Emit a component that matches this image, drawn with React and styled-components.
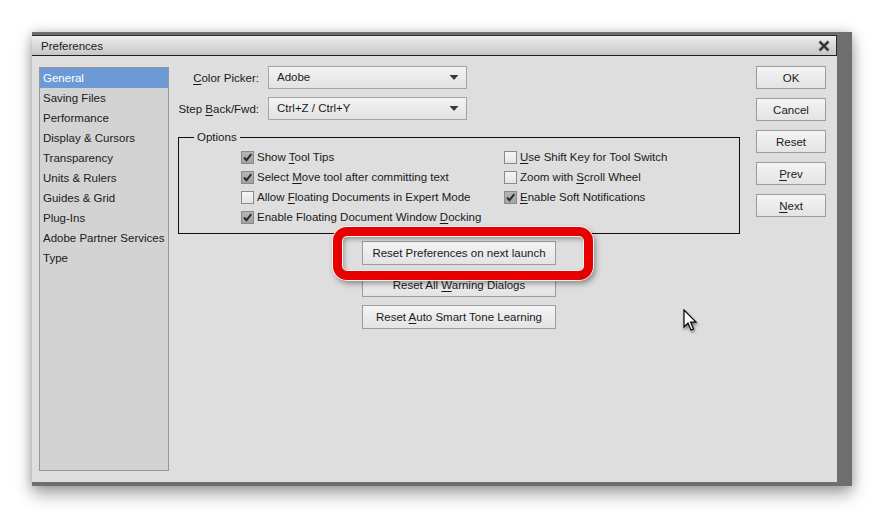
import React from "react";
import styled, { createGlobalStyle } from "styled-components";

const GlobalStyle = createGlobalStyle`
  html, body {
    margin: 0;
    padding: 0;
    background: #ffffff;
  }
  body {
    font-family: "Liberation Sans", Arial, sans-serif;
    font-size: 11.5px;
    color: #1a1a1a;
  }
`;

const categories = [
  "General",
  "Saving Files",
  "Performance",
  "Display & Cursors",
  "Transparency",
  "Units & Rulers",
  "Guides & Grid",
  "Plug-Ins",
  "Adobe Partner Services",
  "Type",
];

const leftOptions = [
  { pre: "Show ", key: "T", post: "ool Tips", checked: true },
  { pre: "Select ", key: "M", post: "ove tool after committing text", checked: true },
  { pre: "Allow ", key: "F", post: "loating Documents in Expert Mode", checked: false },
  { pre: "Enable Floating Document Window ", key: "D", post: "ocking", checked: true },
];

const rightOptions = [
  { pre: "", key: "U", post: "se Shift Key for Tool Switch", checked: false },
  { pre: "Zoom with ", key: "S", post: "croll Wheel", checked: false },
  { pre: "", key: "E", post: "nable Soft Notifications", checked: true },
];

// text with an underlined access key
const Mn = ({ pre, k, post }) => (
  <span>
    {pre}
    <U>{k}</U>
    {post}
  </span>
);

const Check = ({ checked }) => (
  <Box checked={checked}>
    {checked && (
      <svg width="11" height="11" viewBox="0 0 11 11">
        <path d="M2 5.5 L4.5 8.2 L9.3 2.2" fill="none" stroke="#2a2a2a" strokeWidth="1.9" />
      </svg>
    )}
  </Box>
);

const Select = ({ value }) => (
  <SelectBox>
    <span>{value}</span>
    <svg width="10" height="7" viewBox="0 0 10 7">
      <path d="M0.5 1 H9.5 L5 6 Z" fill="#3a3a3a" />
    </svg>
  </SelectBox>
);

const Cursor = () => (
  <CursorWrap>
    <svg width="16" height="24" viewBox="0 0 16 24">
      <path
        d="M1 1 L1 18 L5 14 L8 21 L10.5 20 L7.6 13.2 L13 13.2 Z"
        fill="#fff"
        stroke="#000"
        strokeWidth="1.2"
      />
    </svg>
  </CursorWrap>
);

export default function App() {
  return (
    <>
      <GlobalStyle />
      <Page>
        <Frame>
          <Dialog>
            <TitleBar>
              <span>Preferences</span>
              <svg width="12" height="12" viewBox="0 0 12 12">
                <path d="M1.5 1.5 L10.5 10.5 M10.5 1.5 L1.5 10.5" stroke="#3a3a3a" strokeWidth="2.6" />
              </svg>
            </TitleBar>
            <Body>
              <Sidebar>
                {categories.map((c, i) => (
                  <Category key={c} active={i === 0}>
                    {c}
                  </Category>
                ))}
              </Sidebar>
              <Content>
                <FieldRow>
                  <Label>
                    <Mn pre="" k="C" post="olor Picker:" />
                  </Label>
                  <Select value="Adobe" />
                </FieldRow>
                <FieldRow>
                  <Label>
                    <Mn pre="Step " k="B" post="ack/Fwd:" />
                  </Label>
                  <Select value="Ctrl+Z / Ctrl+Y" />
                </FieldRow>
                <Options>
                  <Legend>Options</Legend>
                  <OptionGrid>
                    <OptionCol>
                      {leftOptions.map((o) => (
                        <OptionRow key={o.post}>
                          <Check checked={o.checked} />
                          <Mn pre={o.pre} k={o.key} post={o.post} />
                        </OptionRow>
                      ))}
                    </OptionCol>
                    <OptionCol>
                      {rightOptions.map((o) => (
                        <OptionRow key={o.post}>
                          <Check checked={o.checked} />
                          <Mn pre={o.pre} k={o.key} post={o.post} />
                        </OptionRow>
                      ))}
                    </OptionCol>
                  </OptionGrid>
                </Options>
                <ResetStack>
                  <Highlighted>
                    <WideButton>
                      <span>Reset Preferences on next launch</span>
                    </WideButton>
                    <RedRing />
                  </Highlighted>
                  <WideButton>
                    <Mn pre="Reset All " k="W" post="arning Dialogs" />
                  </WideButton>
                  <WideButton>
                    <Mn pre="Reset " k="A" post="uto Smart Tone Learning" />
                  </WideButton>
                </ResetStack>
                <Cursor />
              </Content>
              <Actions>
                <Button>OK</Button>
                <Button>Cancel</Button>
                <Button>Reset</Button>
                <Button>
                  <Mn pre="" k="P" post="rev" />
                </Button>
                <Button>
                  <Mn pre="" k="N" post="ext" />
                </Button>
              </Actions>
            </Body>
          </Dialog>
        </Frame>
      </Page>
    </>
  );
}

const Page = styled.div`
  width: 884px;
  height: 518px;
  padding: 32px 0 0 32px;
  box-sizing: border-box;
`;

const Frame = styled.div`
  width: 820px;
  height: 454px;
  box-sizing: border-box;
  padding: 3px 15px 4px 0;
  background: #6e6e6e;
  box-shadow: 0 8px 16px rgba(0, 0, 0, 0.35), 0 0 10px rgba(0, 0, 0, 0.18);
`;

const Dialog = styled.div`
  width: 805px;
  height: 447px;
  background: #dedede;
  display: flex;
  flex-direction: column;
`;

const TitleBar = styled.div`
  height: 21px;
  box-sizing: border-box;
  border-top: 1px solid #2a2a2a;
  border-bottom: 1px solid #1e1e1e;
  border-right: 1px solid #2a2a2a;
  background: linear-gradient(#ececec, #d2d2d2 70%, #c6c6c6);
  display: flex;
  align-items: center;
  justify-content: space-between;
  padding: 0 6px 0 9px;
  color: #1a1a1a;
`;

const Body = styled.div`
  flex: 1;
  display: flex;
  padding: 10px 11px 11px 7px;
`;

const Sidebar = styled.div`
  width: 130px;
  flex: none;
  margin-top: 1px;
  background: #d3d3d3;
  border: 1px solid #969696;
  box-sizing: border-box;
`;

const Category = styled.div`
  height: 20px;
  line-height: 20px;
  padding-left: 3px;
  white-space: nowrap;
  background: ${(p) => (p.active ? "#6b9ad6" : "transparent")};
  color: ${(p) => (p.active ? "#ffffff" : "#1a1a1a")};
`;

const Content = styled.div`
  position: relative;
  flex: 1;
  display: flex;
  flex-direction: column;
  margin-left: 9px;
`;

const FieldRow = styled.div`
  display: flex;
  align-items: center;
  gap: 9px;
  margin-bottom: 8px;
`;

const Label = styled.div`
  width: 81px;
  text-align: right;
  white-space: nowrap;
`;

const SelectBox = styled.div`
  width: 199px;
  height: 23px;
  box-sizing: border-box;
  border: 1px solid #a4a4a4;
  background: linear-gradient(#f3f3f3, #e2e2e2);
  display: flex;
  align-items: center;
  justify-content: space-between;
  padding: 0 7px 0 8px;
  span {
    margin-top: -2px;
  }
`;

const U = styled.span`
  text-decoration: underline;
  text-underline-offset: 2px;
`;

const Options = styled.fieldset`
  margin: 2px 0 0 0;
  padding: 3px 0 6px 0;
  border: 1px solid #111;
  min-width: 0;
`;

const Legend = styled.legend`
  margin-left: 15px;
  padding: 0 3px;
  line-height: 14px;
`;

const OptionGrid = styled.div`
  display: grid;
  grid-template-columns: 263px 1fr;
  padding-left: 62px;
`;

const OptionCol = styled.div`
  display: flex;
  flex-direction: column;
`;

const OptionRow = styled.div`
  height: 20px;
  display: flex;
  align-items: center;
  gap: 3px;
  white-space: nowrap;
`;

const Box = styled.div`
  width: 13px;
  height: 13px;
  box-sizing: border-box;
  border: 1px solid #8a8a8a;
  background: ${(p) =>
    p.checked ? "linear-gradient(#b4b4b4, #a2a2a2)" : "linear-gradient(#f6f6f6, #e4e4e4)"};
  display: flex;
  align-items: center;
  justify-content: center;
  flex: none;
`;

const ResetStack = styled.div`
  display: flex;
  flex-direction: column;
  align-items: center;
  gap: 8px;
  margin-top: 7px;
`;

const Highlighted = styled.div`
  position: relative;
`;

const RedRing = styled.div`
  position: absolute;
  left: -29px;
  top: -14px;
  width: 260px;
  height: 53px;
  box-sizing: border-box;
  border: 9px solid #e80000;
  border-radius: 14px;
  box-shadow: 0 0 0 1px #f4f4f4, inset 0 0 0 1px #f4f4f4,
    inset 2px 3px 5px rgba(0, 0, 0, 0.35), 2px 3px 6px rgba(0, 0, 0, 0.45);
  z-index: 2;
`;

const ButtonBase = styled.div`
  box-sizing: border-box;
  border: 1px solid #9c9c9c;
  background: linear-gradient(#f4f4f4, #e3e3e3);
  display: flex;
  align-items: center;
  justify-content: center;
  color: #1a1a1a;
  white-space: nowrap;
`;

const WideButton = styled(ButtonBase)`
  width: 194px;
  height: 24px;
`;

const Actions = styled.div`
  width: 70px;
  flex: none;
  display: flex;
  flex-direction: column;
  gap: 9px;
  margin-left: 16px;
`;

const Button = styled(ButtonBase)`
  width: 70px;
  height: 23px;
`;

const CursorWrap = styled.div`
  position: absolute;
  left: 505px;
  top: 243px;
  filter: drop-shadow(1px 2px 1.5px rgba(0, 0, 0, 0.45));
`;
